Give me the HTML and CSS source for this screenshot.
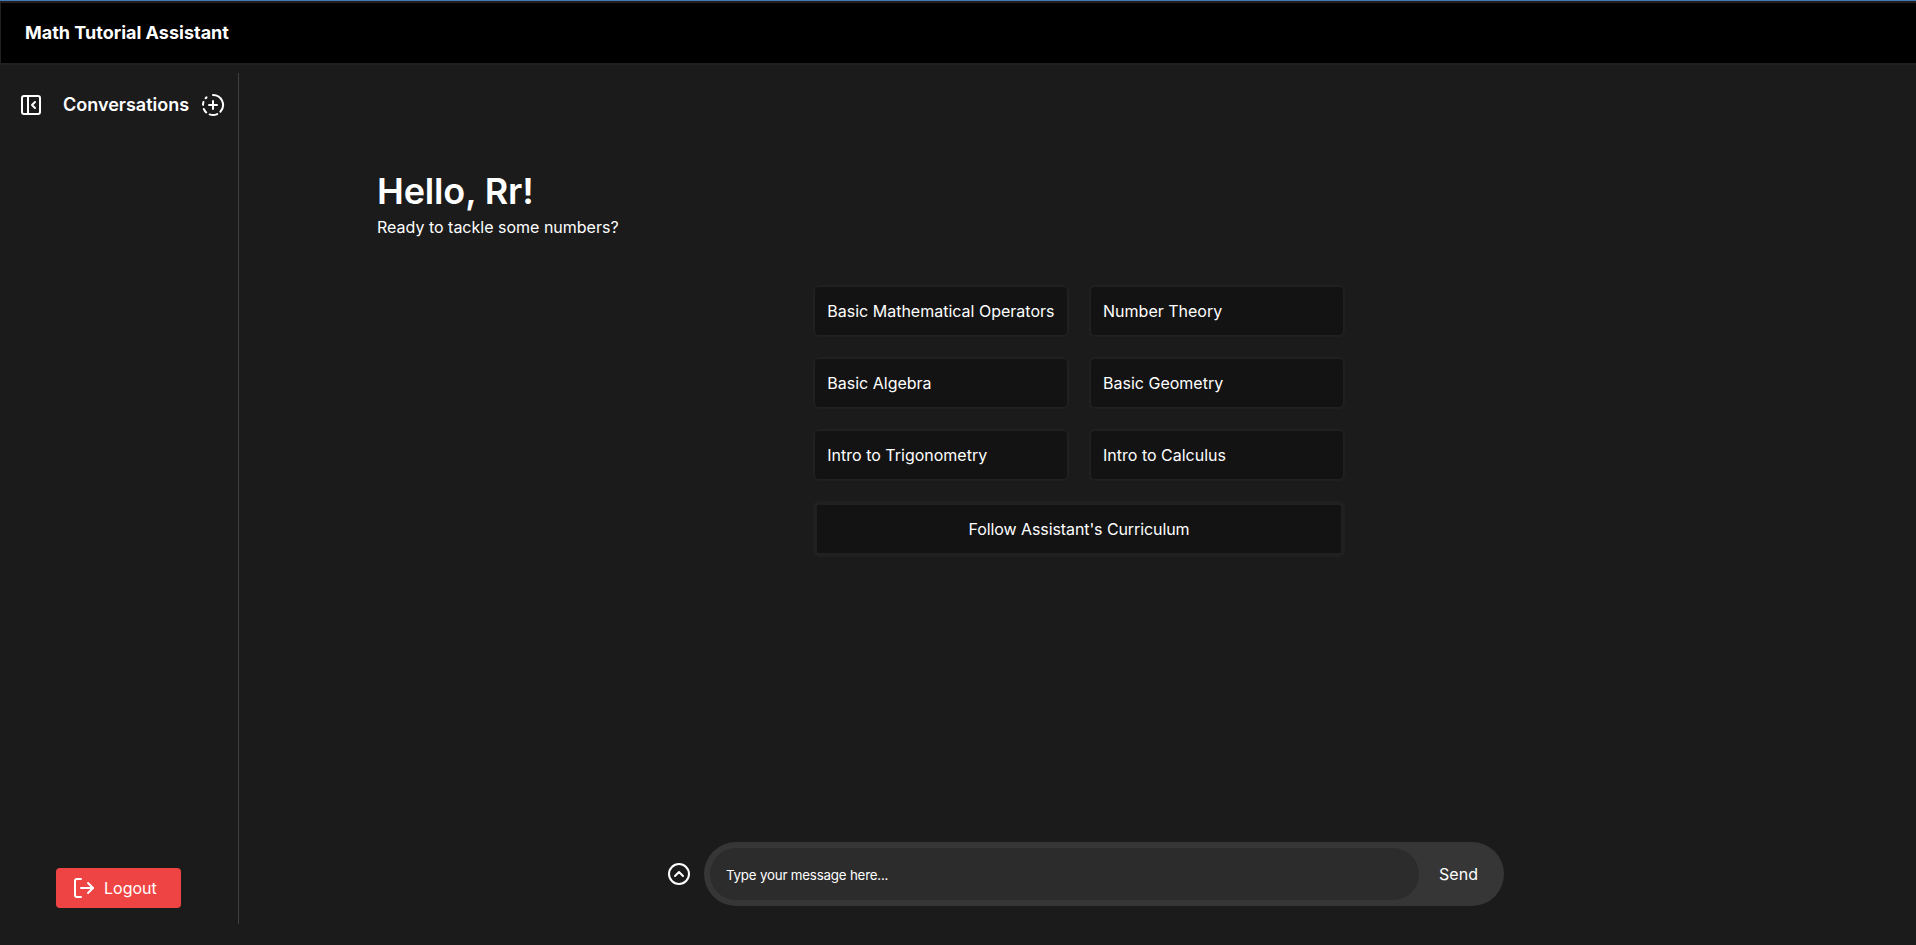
FILE: index.html
```html
<!DOCTYPE html>
<html lang="en">
<head>
<meta charset="utf-8">
<title>Math Tutorial Assistant</title>
<link rel="stylesheet" href="styles.css">
</head>
<body>
<header class="topbar"><span class="brand">Math Tutorial Assistant</span></header>
<div class="layout">
  <aside class="sidebar">
    <div class="sidebar-head">
      <svg class="icon" viewBox="0 0 24 24"><rect width="18" height="18" x="3" y="3" rx="2"/><path d="M9 3v18"/><path d="m16 15-3-3 3-3"/></svg>
      <h2 class="sidebar-title">Conversations</h2>
      <svg class="icon" viewBox="0 0 24 24"><path d="M12 2a10 10 0 0 1 7.38 16.75"/><path d="M12 8v8"/><path d="M16 12H8"/><path d="M2.5 8.875a10 10 0 0 0-.5 3"/><path d="M2.83 16a10 10 0 0 0 2.43 3.4"/><path d="M4.636 5.235a10 10 0 0 1 .891-.857"/><path d="M8.644 21.42a10 10 0 0 0 7.631-.38"/></svg>
    </div>
    <button class="logout">
      <svg class="icon" viewBox="0 0 24 24"><path d="M9 21H5a2 2 0 0 1-2-2V5a2 2 0 0 1 2-2h4"/><path d="m16 17 5-5-5-5"/><path d="M21 12H9"/></svg>
      <span>Logout</span>
    </button>
  </aside>
  <main class="main">
    <section class="greeting">
      <h1 class="hello">Hello, Rr!</h1>
      <p class="ready">Ready to tackle some numbers?</p>
    </section>
    <section class="topics">
      <button class="topic">Basic Mathematical Operators</button>
      <button class="topic">Number Theory</button>
      <button class="topic">Basic Algebra</button>
      <button class="topic">Basic Geometry</button>
      <button class="topic">Intro to Trigonometry</button>
      <button class="topic">Intro to Calculus</button>
      <button class="topic topic-wide">Follow Assistant's Curriculum</button>
    </section>
    <form class="composer">
      <svg class="icon" viewBox="0 0 24 24"><circle cx="12" cy="12" r="10"/><path d="m8 14 4-4 4 4"/></svg>
      <div class="pill">
        <input class="message" type="text" placeholder="Type your message here...">
        <button class="send" type="button">Send</button>
      </div>
    </form>
  </main>
</div>
</body>
</html>
```
FILE: styles.css
```css
* { box-sizing: border-box; margin: 0; }

body {
  height: 945px;
  display: flex;
  flex-direction: column;
  overflow: hidden;
  background: #1b1b1b;
  color: #fff;
  font: 16px/24px Inter, sans-serif;
  border-top: 1px solid #4678b4;
}

button, input { font: inherit; color: inherit; border: 0; }

.icon {
  width: 24px;
  height: 24px;
  flex: none;
  fill: none;
  stroke: #fff;
  stroke-width: 2;
  stroke-linecap: round;
  stroke-linejoin: round;
}

.topbar {
  height: 64px;
  flex: none;
  display: flex;
  align-items: center;
  padding-left: 24px;
  background: #000;
  border: 2px solid #212121;
  border-left-width: 1px;
  border-right: 0;
}

.brand { font-size: 18px; font-weight: 700; line-height: 28px; }

.layout { flex: 1; display: flex; min-height: 0; }

.sidebar {
  width: 239px;
  margin: 8px 0 21px;
  padding: 16px 13px 16px 19px;
  border-right: 1px solid #3f3f46;
  display: flex;
  flex-direction: column;
  justify-content: space-between;
}

.sidebar-head { display: flex; align-items: center; height: 32px; }
.sidebar-title { font-size: 18px; font-weight: 600; line-height: 28px; margin: 0 auto 0 20px; }

.logout {
  width: 125px;
  height: 40px;
  margin-left: 37px;
  padding: 8px 16px;
  display: flex;
  align-items: center;
  gap: 8px;
  background: #ef4444;
  border-radius: 4px;
}

.main {
  flex: 1;
  padding: 106px 0 39px 138px;
  display: flex;
  flex-direction: column;
}

.hello { font-size: 36px; font-weight: 600; line-height: 40px; letter-spacing: -0.15px; }
.ready { margin-top: 4px; }

.topics {
  width: 531.5px;
  margin: 46px 0 0 436.3px;
  display: grid;
  grid-template-columns: 1fr 1fr;
  gap: 20px;
}

.topic {
  height: 52px;
  padding: 0 12px;
  text-align: left;
  white-space: nowrap;
  background: #131313;
  border: 2px solid #202020;
  border-radius: 6px;
}

.topic-wide {
  grid-column: span 2;
  height: 56px;
  text-align: center;
  letter-spacing: -0.09px;
  border-width: 4px;
}

.composer {
  margin: auto 0 0 290px;
  display: flex;
  align-items: center;
  gap: 13px;
}

.pill {
  width: 800px;
  height: 64px;
  padding: 6px;
  display: flex;
  background: #363636;
  border-radius: 32px;
}

.message {
  width: 709px;
  padding: 2px 16px 0;
  font-size: 13.333px;
  letter-spacing: -0.2px;
  background: #2c2c2c;
  border-radius: 26px;
  outline: 0;
}

.message::placeholder { color: #fff; opacity: 1; }

.send { flex: 1; padding: 0; background: none; text-align: center; }
```
